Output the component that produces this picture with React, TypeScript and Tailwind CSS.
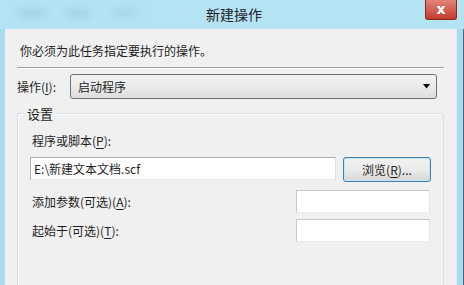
const font = { fontFamily: '"Noto Sans CJK SC", "Noto Sans", sans-serif' };

const U = ({ children }: { children: string }) => <span className="underline underline-offset-2">{children}</span>;

export default function App() {
  return (
    <div className="w-[464px] h-[285px] overflow-hidden flex flex-col bg-[#b2e1f1] text-[12px] text-[#1e1e1e]" style={font}>
      {/* title bar */}
      <div className="relative h-[29px] shrink-0 flex items-center justify-center bg-[#b4e3f3]">
        <div className="absolute left-[18px] top-[8px] w-[30px] h-[10px] rounded-full bg-[#a6d6e8] blur-[3px]" />
        <div className="absolute left-[65px] top-[8px] w-[26px] h-[10px] rounded-full bg-[#a6d6e8] blur-[3px]" />
        <div className="absolute left-[112px] top-[8px] w-[26px] h-[10px] rounded-full bg-[#a8d8ea] blur-[3px]" />
        <span className="text-[14px] text-[#222] -mt-[1px] ml-[4px]">新建操作</span>
        <div className="absolute left-[425px] top-0 w-[32px] h-[20px] rounded-b-[3px] border border-t-0 border-[#8a2a1e] bg-gradient-to-b from-[#e0837a] to-[#c23a2c] flex items-center justify-center">
          <span className="text-white font-bold text-[14px] leading-none -mt-[2px]" style={{ fontFamily: '"DejaVu Sans", sans-serif' }}>x</span>
        </div>
      </div>

      <div className="flex flex-1 min-h-0">
        <div className="w-[5px] shrink-0 bg-[#a9dcee]" />
        <div className="flex-1 bg-[#f0f0f0] px-[12px] flex flex-col">
          <div className="pt-[13px] pl-[3px] leading-[17px]">你必须为此任务指定要执行的操作。</div>
          <div className="mt-[8px] h-[2px] border-t border-[#a0a0a0] border-b-white border-b" />

          <div className="mt-[5px] flex items-center h-[25px]">
            <span className="w-[53px]">操作(<U>I</U>):</span>
            <div className="flex-1 mr-[7px] h-[25px] rounded-[3px] border border-[#707070] bg-gradient-to-b from-[#f3f3f3] via-[#ebebeb] to-[#dcdcdc] flex items-center pl-[7px] pr-[5px]">
              <span className="flex-1">启动程序</span>
              <svg width="8" height="5" viewBox="0 0 8 5"><path d="M0 0h7L3.5 4.5z" fill="#000" /></svg>
            </div>
          </div>

          <div className="relative mt-[14px] flex-1 rounded-t-[3px] border border-b-0 border-[#d5dfe5] shadow-[inset_1px_1px_0_#fff] px-[12px] pt-[18px]">
            <span className="absolute -top-[9px] left-[6px] bg-[#f0f0f0] px-[3px] leading-[17px] text-[13px]">设置</span>
            <div className="pl-[2px] leading-[17px]">程序或脚本(<U>P</U>):</div>
            <div className="mt-[8px] flex items-start">
              <div className="w-[306px] h-[23px] bg-white border border-[#abadb3] border-b-[#e3e9ef] border-r-[#dbdfe6] flex items-center pl-[3px]">E:\新建文本文档.scf</div>
              <button className="ml-[7px] w-[88px] h-[25px] rounded-[3px] border border-[#3c7fb1] shadow-[inset_0_0_0_1px_#c4e5f6] bg-gradient-to-b from-[#f2f2f2] via-[#ebebeb] to-[#d6d6d6] flex items-center justify-center">
                浏览(<U>R</U>)...
              </button>
            </div>
            <div className="mt-[8px] flex items-center h-[23px]">
              <span className="flex-1 pl-[2px]">添加参数(可选)(<U>A</U>):</span>
              <div className="w-[134px] h-[23px] mr-[1px] bg-white border border-[#c8c8c8] border-b-[#ececec] border-r-[#e4e4e4]" />
            </div>
            <div className="mt-[6px] flex items-center h-[23px]">
              <span className="flex-1 pl-[2px]">起始于(可选)(<U>T</U>):</span>
              <div className="w-[134px] h-[23px] mr-[1px] bg-white border border-[#c8c8c8] border-b-[#ececec] border-r-[#e4e4e4]" />
            </div>
          </div>
        </div>
        <div className="w-[8px] shrink-0 flex">
          <div className="w-[1px] bg-[#dfe9ee]" />
          <div className="flex-1 bg-[#a9dcee]" />
          <div className="w-[1px] bg-[#4a6a78]" />
        </div>
      </div>
    </div>
  );
}
